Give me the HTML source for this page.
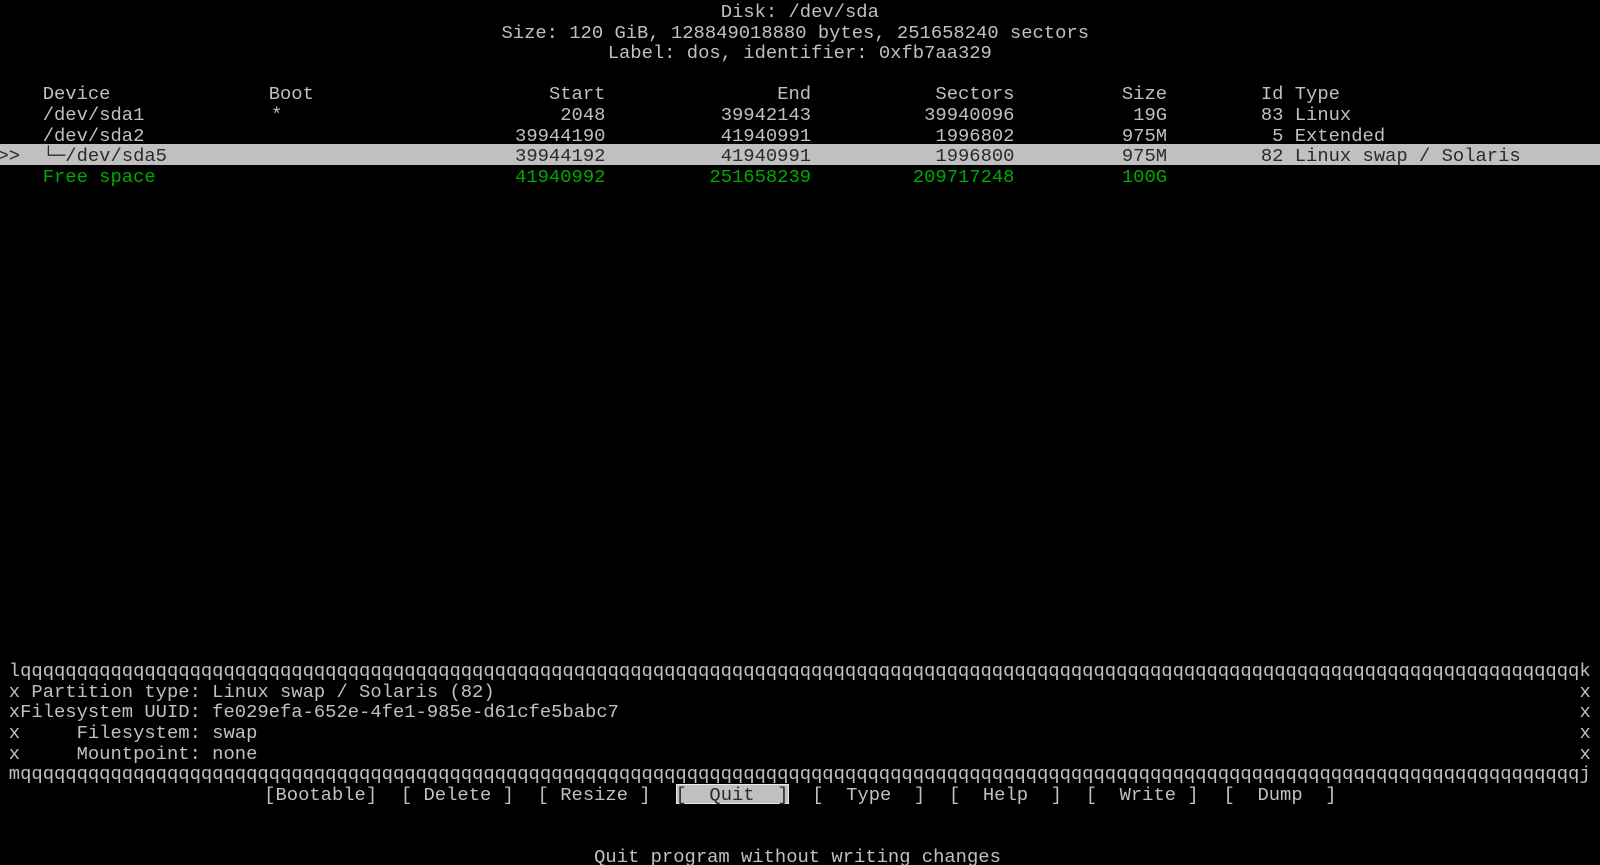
<!DOCTYPE html>
<html><head><meta charset="utf-8"><style>
html,body{margin:0;padding:0;background:#000;width:1600px;height:865px;overflow:hidden}
body{position:relative;font-family:"Liberation Mono","DejaVu Sans Mono",monospace;font-size:18.833px;color:#c0c0c0}
.t{position:absolute;white-space:pre;line-height:20.6px;height:20.6px;left:calc(var(--c)*11.3px - 2.5px);top:calc(var(--r)*20.6px + 2px)}
.g{color:#00a800}
.hl{position:absolute;left:0;width:1600px;top:144.2px;height:20.6px;background:#c0c0c0}
.d{color:#2a2a2a}
.qb{position:absolute;background:#c0c0c0;top:calc(38*20.6px + 1px);height:20.6px;left:calc(60*11.3px - 2.5px);width:calc(10*11.3px);box-shadow:inset 0 0 0 1px #e8e8e8}
</style></head><body>
<div class="t" style="--c:64;--r:0">Disk: /dev/sda</div>
<div class="t" style="--c:44.6;--r:1">Size: 120 GiB, 128849018880 bytes, 251658240 sectors</div>
<div class="t" style="--c:54;--r:2">Label: dos, identifier: 0xfb7aa329</div>

<div class="t" style="--c:4;--r:4">Device</div>
<div class="t" style="--c:24;--r:4">Boot</div>
<div class="t" style="--c:48.8;--r:4">Start</div>
<div class="t" style="--c:69;--r:4">End</div>
<div class="t" style="--c:83;--r:4">Sectors</div>
<div class="t" style="--c:99.5;--r:4">Size</div>
<div class="t" style="--c:111.8;--r:4">Id Type</div>

<div class="t" style="--c:4;--r:5">/dev/sda1</div>
<div class="t" style="--c:24.2;--r:5">*</div>
<div class="t" style="--c:49.8;--r:5">2048</div>
<div class="t" style="--c:64;--r:5">39942143</div>
<div class="t" style="--c:82;--r:5">39940096</div>
<div class="t" style="--c:100.5;--r:5">19G</div>
<div class="t" style="--c:111.8;--r:5">83 Linux</div>

<div class="t" style="--c:4;--r:6">/dev/sda2</div>
<div class="t" style="--c:45.8;--r:6">39944190</div>
<div class="t" style="--c:64;--r:6">41940991</div>
<div class="t" style="--c:83;--r:6">1996802</div>
<div class="t" style="--c:99.5;--r:6">975M</div>
<div class="t" style="--c:112.8;--r:6">5 Extended</div>

<div class="hl"></div>
<div class="t d" style="--c:0;--r:7">&gt;&gt;</div>
<div class="t d" style="--c:4;--r:7">└─/dev/sda5</div>
<div class="t d" style="--c:45.8;--r:7">39944192</div>
<div class="t d" style="--c:64;--r:7">41940991</div>
<div class="t d" style="--c:83;--r:7">1996800</div>
<div class="t d" style="--c:99.5;--r:7">975M</div>
<div class="t d" style="--c:111.8;--r:7">82 Linux swap / Solaris</div>

<div class="t g" style="--c:4;--r:8">Free space</div>
<div class="t g" style="--c:45.8;--r:8">41940992</div>
<div class="t g" style="--c:63;--r:8">251658239</div>
<div class="t g" style="--c:81;--r:8">209717248</div>
<div class="t g" style="--c:99.5;--r:8">100G</div>

<div class="t" style="--c:1;--r:32">lqqqqqqqqqqqqqqqqqqqqqqqqqqqqqqqqqqqqqqqqqqqqqqqqqqqqqqqqqqqqqqqqqqqqqqqqqqqqqqqqqqqqqqqqqqqqqqqqqqqqqqqqqqqqqqqqqqqqqqqqqqqqqqqqqqqqqqqqqqk</div>
<div class="t" style="--c:1;--r:33">x Partition type: Linux swap / Solaris (82)</div>
<div class="t" style="--c:140;--r:33">x</div>
<div class="t" style="--c:1;--r:34">xFilesystem UUID: fe029efa-652e-4fe1-985e-d61cfe5babc7</div>
<div class="t" style="--c:140;--r:34">x</div>
<div class="t" style="--c:1;--r:35">x     Filesystem: swap</div>
<div class="t" style="--c:140;--r:35">x</div>
<div class="t" style="--c:1;--r:36">x     Mountpoint: none</div>
<div class="t" style="--c:140;--r:36">x</div>
<div class="t" style="--c:1;--r:37">mqqqqqqqqqqqqqqqqqqqqqqqqqqqqqqqqqqqqqqqqqqqqqqqqqqqqqqqqqqqqqqqqqqqqqqqqqqqqqqqqqqqqqqqqqqqqqqqqqqqqqqqqqqqqqqqqqqqqqqqqqqqqqqqqqqqqqqqqqqj</div>

<div class="qb"></div>
<div class="t" style="--c:23.6;--r:38">[Bootable]</div>
<div class="t" style="--c:35.7;--r:38">[ Delete ]</div>
<div class="t" style="--c:47.8;--r:38">[ Resize ]</div>
<div class="t d" style="--c:60;--r:38">[  Quit  ]</div>
<div class="t" style="--c:72.1;--r:38">[  Type  ]</div>
<div class="t" style="--c:84.2;--r:38">[  Help  ]</div>
<div class="t" style="--c:96.3;--r:38">[  Write ]</div>
<div class="t" style="--c:108.5;--r:38">[  Dump  ]</div>

<div class="t" style="--c:52.8;--r:41">Quit program without writing changes</div>
</body></html>
